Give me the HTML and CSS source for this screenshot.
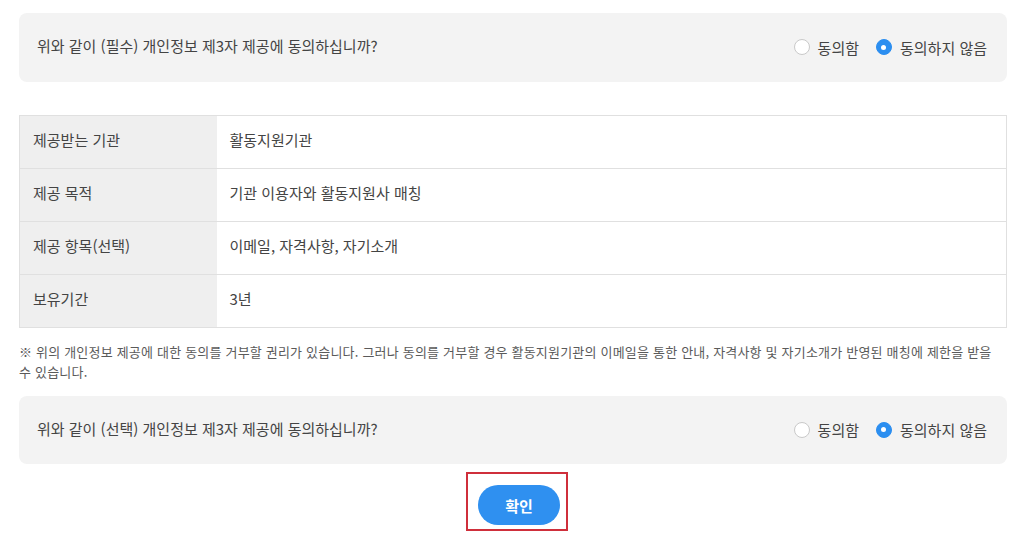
FILE: index.html
```html
<!DOCTYPE html>
<html lang="ko">
<head>
<meta charset="utf-8">
<link rel="stylesheet" href="styles.css">
</head>
<body>
<div class="wrap">
  <div class="ask">
    <p class="ask-q">위와 같이 (필수) 개인정보 제3자 제공에 동의하십니까?</p>
    <div class="radios">
      <label class="radio"><span class="dot"></span>동의함</label>
      <label class="radio on"><span class="dot"></span>동의하지 않음</label>
    </div>
  </div>

  <table class="info">
    <tr><th>제공받는 기관</th><td>활동지원기관</td></tr>
    <tr><th>제공 목적</th><td>기관 이용자와 활동지원사 매칭</td></tr>
    <tr><th>제공 항목(선택)</th><td>이메일, 자격사항, 자기소개</td></tr>
    <tr><th>보유기간</th><td>3년</td></tr>
  </table>

  <p class="note">※ 위의 개인정보 제공에 대한 동의를 거부할 권리가 있습니다. 그러나 동의를 거부할 경우 활동지원기관의 이메일을 통한 안내, 자격사항 및 자기소개가 반영된 매칭에 제한을 받을 수 있습니다.</p>

  <div class="ask ask2">
    <p class="ask-q">위와 같이 (선택) 개인정보 제3자 제공에 동의하십니까?</p>
    <div class="radios">
      <label class="radio"><span class="dot"></span>동의함</label>
      <label class="radio on"><span class="dot"></span>동의하지 않음</label>
    </div>
  </div>

  <div class="actions">
    <div class="hl"><button class="btn">확인</button></div>
  </div>
</div>
</body>
</html>
```

FILE: styles.css
```css
* { box-sizing: border-box; }
html, body { margin: 0; padding: 0; background: #fff; }
body {
  font-family: "Noto Sans CJK KR", "Noto Sans", sans-serif;
  color: #444;
  font-size: 15px;
}
.wrap {
  width: 988px;
  margin-left: 19px;
  padding-top: 13px;
}
.ask {
  height: 69px;
  background: #f3f3f3;
  border-radius: 8px;
  display: flex;
  align-items: center;
  justify-content: space-between;
  padding: 0 20px 0 18px;
}
.ask2 { height: 68px; }
.ask-q { margin: 0; padding-bottom: 4px; font-size: 15px; color: #444; }
.radios { display: flex; align-items: center; gap: 17px; padding-bottom: 1px; }
.radio { display: flex; align-items: center; gap: 8px; font-size: 15px; color: #444; }
.dot {
  width: 16px; height: 16px; border-radius: 50%;
  border: 1px solid #c9c9c9; background: #fff;
  display: flex; align-items: center; justify-content: center;
}
.radio.on .dot { background: #2b8ef0; border-color: #2b8ef0; }
.radio.on .dot::after {
  content: ""; width: 5px; height: 5px; border-radius: 50%; background: #fff;
}
.info {
  width: 100%;
  margin-top: 33px;
  border-collapse: collapse;
  border: 1px solid #e0e0e0;
}
.info th, .info td {
  height: 53px;
  border-bottom: 1px solid #e0e0e0;
  font-weight: 400;
  text-align: left;
  font-size: 15px;
  color: #444;
  padding: 0 0 5px;
}
.info th {
  width: 197px;
  background: #efefef;
  padding-left: 13px;
}
.info td { padding-left: 13px; }
.note {
  margin: 14px 0 0;
  font-size: 13px;
  line-height: 20px;
  color: #5a5a5a;
  letter-spacing: 0.2px;
}
.ask2 { margin-top: 14px; }
.actions { display: flex; justify-content: center; padding-top: 8px; }
.hl {
  margin-left: 8px;
  border: 2px solid #cf2f3b;
  padding: 11px 7px 4px 10px;
  width: 102px; height: 59px;
}
.btn {
  width: 82px; height: 40px; border: 0; border-radius: 20px;
  background: #2f90f0; color: #fff;
  font-family: inherit; font-size: 15px; font-weight: 700;
  padding: 0;
}
```
